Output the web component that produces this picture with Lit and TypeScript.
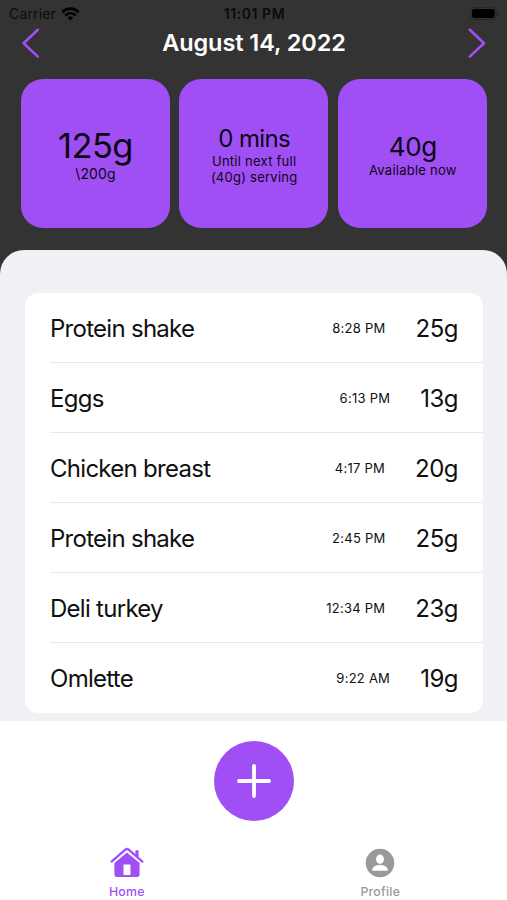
import { LitElement, html, css, svg } from "lit";
import { customElement, property } from "lit/decorators.js";

interface Entry {
  name: string;
  time: string;
  grams: string;
}

const ENTRIES: Entry[] = [
  { name: "Protein shake", time: "8:28 PM", grams: "25g" },
  { name: "Eggs", time: "6:13 PM", grams: "13g" },
  { name: "Chicken breast", time: "4:17 PM", grams: "20g" },
  { name: "Protein shake", time: "2:45 PM", grams: "25g" },
  { name: "Deli turkey", time: "12:34 PM", grams: "23g" },
  { name: "Omlette", time: "9:22 AM", grams: "19g" },
];

@customElement("status-bar")
class StatusBar extends LitElement {
  static styles = css`
    :host {
      display: grid;
      grid-template-columns: 1fr auto 1fr;
      align-items: center;
      height: 27px;
      padding: 0 7px 0 9px;
      font-size: 14px;
      color: #0b0b0b;
    }
    .left {
      display: flex;
      align-items: center;
      gap: 5px;
      letter-spacing: 0.15px;
    }
    .time {
      font-weight: 600;
      font-size: 14px;
      letter-spacing: 0.55px;
    }
    .battery {
      justify-self: end;
    }
    svg {
      display: block;
    }
  `;

  render() {
    return html`
      <div class="left">
        <span>Carrier</span>
        <svg width="19" height="14" viewBox="0 0 19 14" fill="none" stroke="#000" stroke-width="2.7">
          <path d="M1.3 5.2C6 0.4 13 0.4 17.7 5.2" />
          <path d="M4.2 8.5C7.3 5.5 11.7 5.5 14.8 8.5" />
          <path d="M9.5 13.6L6.6 10.7C8.2 9.2 10.8 9.2 12.4 10.7Z" fill="#000" stroke="none" />
        </svg>
      </div>
      <span class="time">11:01 PM</span>
      <svg class="battery" width="30" height="13" viewBox="0 0 30 13">
        <rect x="0.5" y="0.5" width="25.6" height="12" rx="3.6" fill="none" stroke="#282828" />
        <rect x="2" y="2" width="22.6" height="9" rx="2.2" fill="#000" />
        <path d="M27.4 4.4C29.4 5.2 29.4 7.8 27.4 8.6Z" fill="#202020" />
      </svg>
    `;
  }
}

@customElement("stat-card")
class StatCard extends LitElement {
  @property() value = "";
  @property() size = "medium";
  @property({ attribute: false }) lines: string[] = [];

  static styles = css`
    :host {
      display: flex;
      flex-direction: column;
      align-items: center;
      justify-content: center;
      box-sizing: border-box;
      height: 149px;
      padding: 1px 0 0 1px;
      border-radius: 22px;
      background: #a04ff5;
      color: #0c0514;
      text-align: center;
    }
    .value {
      font-size: 24px;
      line-height: 29px;
      letter-spacing: -0.6px;
    }
    .value.wide {
      font-size: 26px;
      line-height: 31px;
      letter-spacing: -0.3px;
    }
    .value.large {
      font-size: 34.5px;
      line-height: 40px;
      letter-spacing: -0.6px;
    }
    .caption {
      font-size: 13px;
      line-height: 16px;
      letter-spacing: 0.25px;
    }
    .caption.large {
      font-size: 14px;
      letter-spacing: 0.1px;
    }
  `;

  render() {
    return html`
      <div class="value ${this.size}">${this.value}</div>
      ${this.lines.map((l) => html`<div class="caption ${this.size}">${l}</div>`)}
    `;
  }
}

@customElement("meal-row")
class MealRow extends LitElement {
  @property({ attribute: false }) entry!: Entry;

  static styles = css`
    :host {
      display: flex;
      align-items: center;
      box-sizing: border-box;
      height: 70px;
      margin-left: 25px;
      padding: 2px 24.5px 0 0;
      border-bottom: 1px solid #e9e9eb;
      color: #101010;
    }
    :host(:last-child) {
      border-bottom-color: transparent;
    }
    .name {
      flex: 1;
      font-size: 24px;
      letter-spacing: -0.72px;
    }
    .time {
      font-size: 13px;
      letter-spacing: 0.25px;
      margin-right: 30px;
    }
    .grams {
      font-size: 24px;
      letter-spacing: -0.5px;
    }
  `;

  render() {
    return html`
      <span class="name">${this.entry.name}</span>
      <span class="time">${this.entry.time}</span>
      <span class="grams">${this.entry.grams}</span>
    `;
  }
}

@customElement("app-root")
class AppRoot extends LitElement {
  static styles = css`
    :host {
      display: flex;
      flex-direction: column;
      width: 507px;
      height: 900px;
      overflow: hidden;
      background: #fff;
      font-family: Inter, "Liberation Sans", sans-serif;
    }
    svg {
      display: block;
    }
    .top {
      background: #333;
      height: 277px;
      margin-bottom: -27px;
      flex: none;
    }
    .nav {
      display: flex;
      align-items: center;
      justify-content: space-between;
      height: 31px;
      padding: 0 21px;
      color: #fff;
    }
    .title {
      padding-left: 1px;
      font-size: 23.5px;
      font-weight: 600;
      letter-spacing: -0.08px;
    }
    .cards {
      display: grid;
      grid-template-columns: repeat(3, 149px);
      gap: 9.7px;
      padding: 21px 0 0 20.5px;
    }
    .sheet {
      flex: none;
      box-sizing: border-box;
      height: 471px;
      padding: 42.5px 24.5px 8px 25px;
      border-radius: 24px 24px 0 0;
      background: #f1f0f5;
    }
    .list {
      border-radius: 13px;
      background: #fff;
      overflow: hidden;
    }
    .add {
      display: grid;
      place-items: center;
      width: 80px;
      height: 80px;
      margin: 20px auto 0;
      border-radius: 50%;
      background: #a04ff5;
    }
    .tabs {
      display: grid;
      grid-template-columns: 1fr 1fr;
      margin-top: 25px;
    }
    .tab {
      display: flex;
      flex-direction: column;
      align-items: center;
      color: #999;
      font-size: 12.3px;
      font-weight: 500;
      line-height: 16px;
      letter-spacing: 0.25px;
    }
    .tab svg {
      margin-bottom: 3.5px;
    }
    .tab.active {
      color: #a04ff5;
    }
  `;

  private chevron(d: string) {
    return html`<svg width="18" height="30" viewBox="0 0 18 30" fill="none" stroke="#a04ff5" stroke-width="2.6" stroke-linecap="round" stroke-linejoin="round">
      ${svg`<path d=${d} />`}
    </svg>`;
  }

  render() {
    return html`
      <div class="top">
        <status-bar></status-bar>
        <div class="nav">
          ${this.chevron("M16.8 1.8L2.6 15.3L16.8 28.6")}
          <span class="title">August 14, 2022</span>
          ${this.chevron("M1.8 1.8L16 15.3L1.8 28.6")}
        </div>
        <div class="cards">
          <stat-card value="125g" size="large" .lines=${["\\200g"]}></stat-card>
          <stat-card value="0 mins" .lines=${["Until next full", "(40g) serving"]}></stat-card>
          <stat-card value="40g" size="wide" .lines=${["Available now"]}></stat-card>
        </div>
      </div>
      <div class="sheet">
        <div class="list">
          ${ENTRIES.map((e) => html`<meal-row .entry=${e}></meal-row>`)}
        </div>
      </div>
      <div class="add">
        <svg width="34" height="34" viewBox="0 0 34 34" stroke="#fff" stroke-width="3.8" stroke-linecap="round">
          <path d="M17 2V32M2 17H32" />
        </svg>
      </div>
      <div class="tabs">
        <div class="tab active">
          <svg width="36" height="34" viewBox="0 0 36 34">
            <path d="M2.6 15.6L16.6 3.5Q18 2.4 19.4 3.5L33.4 15.6" fill="none" stroke="#a04ff5" stroke-width="2.3" stroke-linecap="round" />
            <path d="M26.4 4.2H29.6V12L26.4 9.2Z" fill="#a04ff5" />
            <path fill-rule="evenodd" fill="#a04ff5" d="M18 6.4L30.6 17V28.2Q30.6 31 27.8 31H8.2Q5.4 31 5.4 28.2V17ZM14.5 18.6V28.9H21.5V18.6Z" />
          </svg>
          <span>Home</span>
        </div>
        <div class="tab">
          <svg width="36" height="34" viewBox="0 0 36 34">
            <circle cx="18" cy="17" r="14.3" fill="#999" />
            <ellipse cx="18" cy="13.2" rx="4" ry="4.6" fill="#fff" />
            <path d="M10.2 24.8C10.2 20.4 14 19 18 19S25.8 20.4 25.8 24.8Z" fill="#fff" />
          </svg>
          <span>Profile</span>
        </div>
      </div>
    `;
  }
}
